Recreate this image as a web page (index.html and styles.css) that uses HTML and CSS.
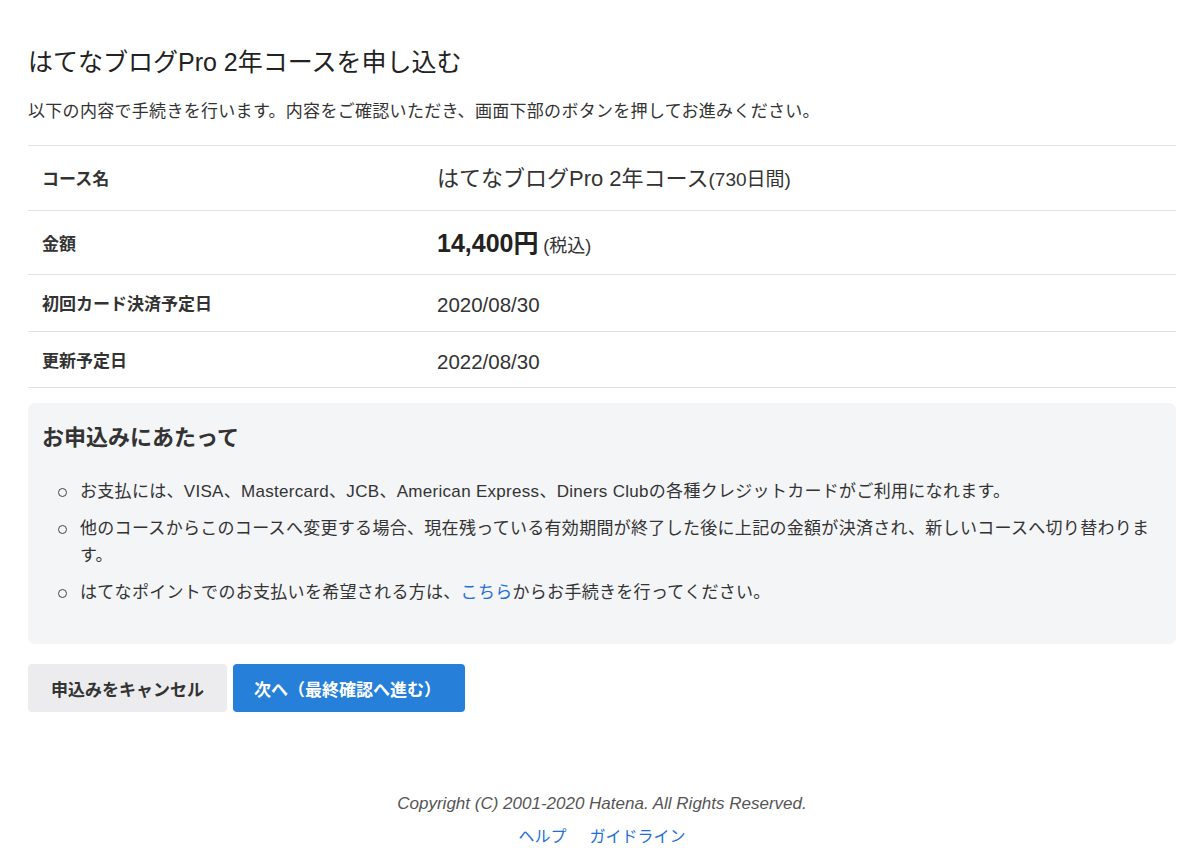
FILE: index.html
```html
<!DOCTYPE html>
<html lang="ja">
<head>
<meta charset="utf-8">
<title>はてなブログPro 2年コースを申し込む</title>
<link rel="stylesheet" href="styles.css">
</head>
<body>
<div class="page">
  <h1 class="title">はてなブログPro 2年コースを申し込む</h1>
  <p class="lead">以下の内容で手続きを行います。内容をご確認いただき、画面下部のボタンを押してお進みください。</p>

  <table class="summary">
    <tr class="row-lg row-first">
      <th>コース名</th>
      <td><span class="course">はてなブログPro 2年コース</span><span class="days">(730日間)</span></td>
    </tr>
    <tr class="row-lg">
      <th>金額</th>
      <td><span class="price">14,400円</span> <span class="tax">(税込)</span></td>
    </tr>
    <tr class="row-md">
      <th>初回カード決済予定日</th>
      <td class="date">2020/08/30</td>
    </tr>
    <tr>
      <th>更新予定日</th>
      <td class="date">2022/08/30</td>
    </tr>
  </table>

  <section class="notice">
    <h2 class="notice-title">お申込みにあたって</h2>
    <ul class="notice-list">
      <li><span>お支払には、VISA、Mastercard、JCB、American Express、Diners Clubの各種クレジットカードがご利用になれます。</span></li>
      <li><span>他のコースからこのコースへ変更する場合、現在残っている有効期間が終了した後に上記の金額が決済され、新しいコースへ切り替わります。</span></li>
      <li><span>はてなポイントでのお支払いを希望される方は、<a href="#" class="link">こちら</a>からお手続きを行ってください。</span></li>
    </ul>
  </section>

  <div class="actions">
    <button class="btn btn-cancel" type="button">申込みをキャンセル</button>
    <button class="btn btn-next" type="button">次へ（最終確認へ進む）</button>
  </div>

  <footer class="footer">
    <p class="copyright">Copyright (C) 2001-2020 Hatena. All Rights Reserved.</p>
    <nav class="footer-links">
      <a href="#" class="link">ヘルプ</a>
      <a href="#" class="link">ガイドライン</a>
    </nav>
  </footer>
</div>
</body>
</html>
```

FILE: styles.css
```css
* { box-sizing: border-box; }

html, body {
  margin: 0;
  padding: 0;
  background: #fff;
}

body {
  font-family: "Liberation Sans", "Noto Sans CJK JP", sans-serif;
  color: #333;
  font-size: 17px;
}

.page {
  padding: 45px 24px 0 28px;
}

.title {
  margin: 0;
  font-size: 25px;
  line-height: 34px;
  font-weight: normal;
  color: #222;
}

.lead {
  margin: 19px 0 0;
  font-size: 17px;
  line-height: 27px;
  letter-spacing: 0.3px;
  color: #333;
}

.summary {
  width: 100%;
  margin-top: 20px;
  border-collapse: collapse;
  border-top: 1px solid #dde3e8;
}

.summary tr {
  border-bottom: 1px solid #dde3e8;
}

.summary th,
.summary td {
  height: 56px;
  padding: 4px 0 0;
  vertical-align: middle;
  line-height: 28px;
  color: #333;
}

.summary th {
  width: 409px;
  padding-left: 14px;
  text-align: left;
  font-weight: bold;
  font-size: 17px;
}

.summary .row-lg th,
.summary .row-lg td {
  height: 64px;
}

.summary .row-first th,
.summary .row-first td {
  height: 65px;
}

.summary .row-md th,
.summary .row-md td {
  height: 57px;
}

.course {
  font-size: 22px;
}
.days {
  font-size: 19px;
}
.price {
  font-size: 25px;
  font-weight: bold;
  color: #222;
}
.tax {
  font-size: 18px;
}
.summary .date {
  font-size: 20.5px;
}

.notice {
  margin-top: 15px;
  background: #f4f5f7;
  border-radius: 7px;
  padding: 19px 14px 28px;
}

.notice-title {
  margin: 0;
  font-size: 22px;
  line-height: 32px;
  font-weight: bold;
  color: #333;
}

.notice-list {
  list-style: none;
  margin: 24px 0 0;
  padding: 0 0 0 14px;
}

.notice-list li {
  display: flex;
  align-items: flex-start;
  font-size: 17px;
  line-height: 27px;
  margin-bottom: 10px;
  letter-spacing: 0.3px;
}

.notice-list li::before {
  content: "";
  flex: none;
  width: 7px;
  height: 7px;
  border: 1.2px solid #444;
  border-radius: 50%;
  margin: 10px 13px 0 2px;
}

.link {
  color: #1e6fd9;
  text-decoration: none;
}

.actions {
  display: flex;
  gap: 6px;
  margin-top: 20px;
}

.btn {
  font-family: inherit;
  font-size: 17px;
  font-weight: bold;
  height: 48px;
  border: none;
  border-radius: 4px;
  padding: 0 23px;
  cursor: pointer;
}

.btn-cancel {
  background: #ececee;
  color: #333;
}

.btn-next {
  background: #2680d9;
  color: #fff;
  padding: 0 24px 0 21px;
}

.footer {
  margin-top: 80px;
  text-align: center;
}

.copyright {
  margin: 0;
  font-style: italic;
  font-size: 17px;
  line-height: 24px;
  color: #555;
}

.footer-links {
  margin-top: 9px;
  display: flex;
  justify-content: center;
  gap: 23px;
  font-size: 16px;
  line-height: 24px;
}
```
